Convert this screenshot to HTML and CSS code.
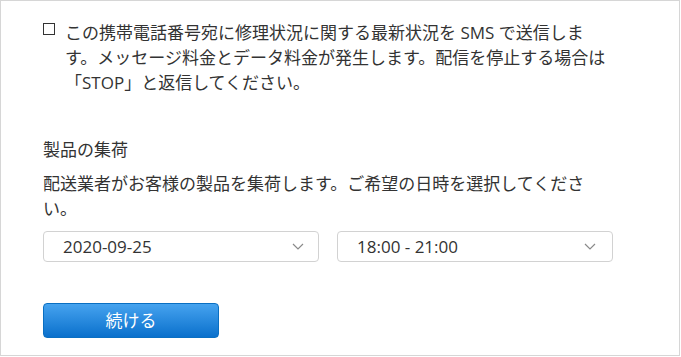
FILE: index.html
```html
<!DOCTYPE html>
<html lang="ja">
<head>
<meta charset="utf-8">
<link rel="stylesheet" href="styles.css">
</head>
<body>
<div class="panel">
  <div class="sms">
    <span class="check"></span>
    <p class="sms-text">この携帯電話番号宛に修理状況に関する最新状況を SMS で送信します。メッセージ料金とデータ料金が発生します。配信を停止する場合は「STOP」と返信してください。</p>
  </div>
  <h2 class="heading">製品の集荷</h2>
  <p class="desc">配送業者がお客様の製品を集荷します。ご希望の日時を選択してください。</p>
  <div class="selects">
    <div class="select"><span>2020-09-25</span><svg class="chev" width="12" height="7" viewBox="0 0 12 7"><path d="M1 1l5 5 5-5" fill="none" stroke="#8a8a8a" stroke-width="1.2"/></svg></div>
    <div class="select"><span>18:00 - 21:00</span><svg class="chev" width="12" height="7" viewBox="0 0 12 7"><path d="M1 1l5 5 5-5" fill="none" stroke="#8a8a8a" stroke-width="1.2"/></svg></div>
  </div>
  <button class="btn">続ける</button>
</div>
</body>
</html>
```
FILE: styles.css
```css
html, body { margin: 0; padding: 0; background: #fff; }
body {
  font-family: "Open Sans", "Noto Sans CJK JP", sans-serif;
  font-size: 17px;
  color: #333;
}
.panel {
  box-sizing: border-box;
  width: 680px;
  height: 356px;
  border: 1px solid #d6d6d6;
  padding: 19px 66px 0 42px;
}
.sms {
  display: flex;
  align-items: flex-start;
}
.check {
  flex: none;
  box-sizing: border-box;
  width: 12px;
  height: 12px;
  border: 1.5px solid #333;
  margin: 3px 10px 0 0;
}
.sms-text {
  margin: 0;
  line-height: 25px;
  width: 548px;
}
.heading {
  margin: 42px 0 0;
  font-size: 17px;
  font-weight: normal;
  line-height: 25px;
}
.desc {
  margin: 9px 0 0;
  line-height: 25px;
  width: 570px;
}
.selects {
  display: flex;
  gap: 18px;
  margin-top: 10px;
}
.select {
  box-sizing: border-box;
  width: 276px;
  height: 31px;
  border: 1px solid #d2d2d2;
  border-radius: 4px;
  display: flex;
  align-items: center;
  justify-content: space-between;
  padding: 0 14px 0 19px;
  line-height: 1;
}
.select:last-child { padding-right: 16px; }
.chev { display: block; }
.btn {
  display: block;
  margin-top: 41px;
  box-sizing: border-box;
  width: 176px;
  height: 35px;
  border: 1px solid #0a6fc2;
  border-radius: 4px;
  background: linear-gradient(#46a3ef, #0a70cc);
  color: #fff;
  font-family: inherit;
  font-size: 17px;
  line-height: 1;
  padding: 0;
}
```
